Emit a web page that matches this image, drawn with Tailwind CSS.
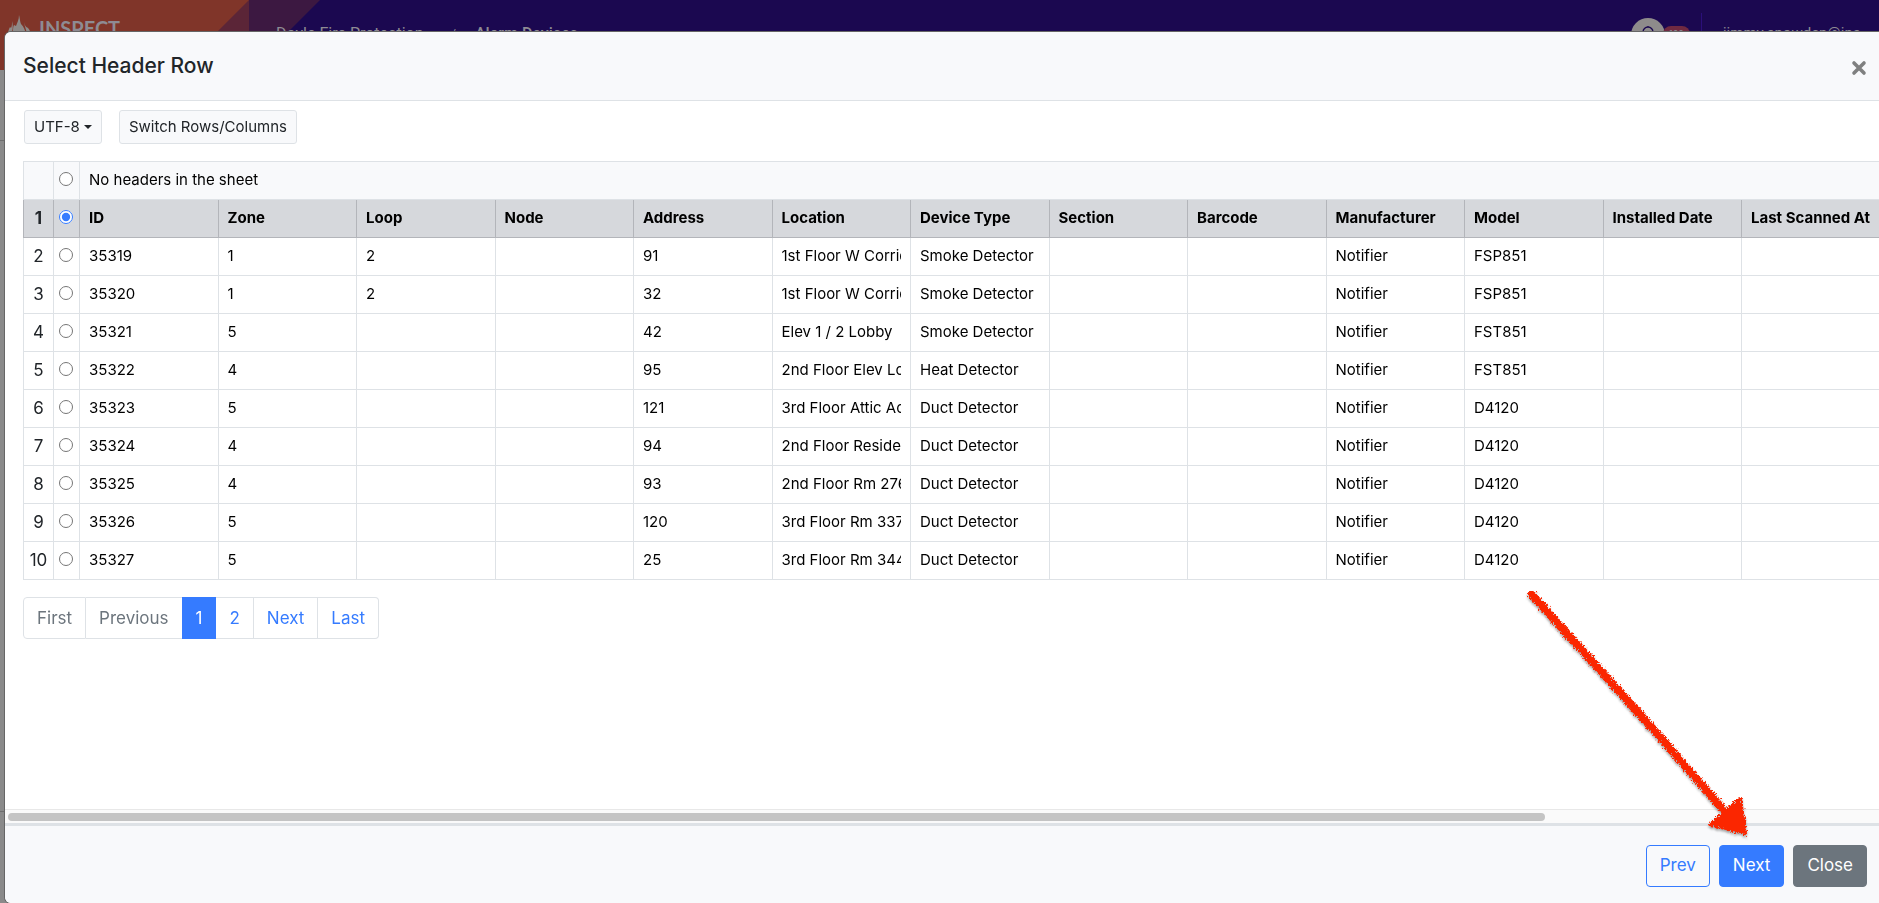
<!DOCTYPE html>
<html lang="en">
  <head>
    <meta charset="UTF-8" />
    <meta name="viewport" content="width=device-width, initial-scale=1.0" />
    <script src="https://cdn.jsdelivr.net/npm/@tailwindcss/browser@4"></script>
    <title>Alarm Devices - Import</title>
  </head>
  <body class="h-screen overflow-hidden bg-[#8a8a8a] font-['Inter','Liberation_Sans',sans-serif] text-[#212529]">
    <!-- page behind the modal -->
    <header class="relative flex h-[70px] items-start bg-[#1b0850] text-[#8e8b93]">
      <svg class="absolute top-0 left-0" width="330" height="70" viewBox="0 0 330 70">
        <path d="M0 0H320L250 70H0Z" fill="#3c1841" />
        <path d="M0 0H249V70H0Z" fill="#5b2537" />
        <path d="M0 0H249L179 70H0Z" fill="#803529" />
      </svg>
      <div class="relative flex w-[249px] gap-2 pt-[15px] pl-2">
        <svg width="23" height="28" viewBox="0 0 23 28" fill="#8e8b89">
          <path d="M11 0C12 4 12 7 13 9C16 12 17 15 18 20V28H5V17C5 14 5 12 6 10L8 11C9 8 11 5 11 0Z" />
          <path d="M4 6C5 10 5 13 4 17V28H0V19C0 16 1 14 2 12L3 13C4 11 4 9 4 6Z" />
          <path d="M16 7C17 11 18 12 20 13C22 15 23 18 23 21V28H19V18C18 15 17 12 16 7Z" />
        </svg>
        <span class="pt-px font-['Lato',sans-serif] text-[20px] leading-6 font-bold">INSPECT</span>
      </div>
      <nav class="relative flex pt-[22px] pl-[27px] font-['Roboto',sans-serif] text-[16px] leading-6">
        <a href="#" class="w-[175px]">Doyle Fire Protection</a>
        <span class="w-6 text-xs leading-6">/</span>
        <a href="#" class="font-medium">Alarm Devices</a>
      </nav>
      <div class="relative ml-auto flex items-start pr-[27px]">
        <div class="relative mt-[18px] size-[34px] rounded-full bg-[#8e8b8b]">
          <svg class="absolute top-2 left-[9px]" width="16" height="18" viewBox="0 0 16 18" fill="none" stroke="#1b0850" stroke-width="1.3">
            <path d="M8 0V1M3 13V6a5 5 0 0 1 10 0V13L15 15H1Z" />
          </svg>
          <span class="absolute top-2 left-8 rounded-full bg-[#702a41] px-[6px] text-[9px] leading-4">100</span>
        </div>
        <div class="mt-[13px] ml-[36px] h-11 w-px bg-[#2b0f7a]"></div>
        <span class="w-[150px] pt-[21px] pl-[21px] font-['Roboto',sans-serif] text-[15px] leading-6">jimmy.snowden@ins</span>
      </div>
    </header>
    <div class="h-[71px] border-b border-[#6e6e6e]"></div>
    <div class="h-[671px] border-b border-[#6e6e6e]"></div>

    <!-- modal -->
    <div role="dialog" aria-labelledby="modal-title" class="fixed top-8 right-0 bottom-0 left-[5px] flex flex-col overflow-hidden rounded-l-md bg-white shadow-[0_0_0_1px_#666]">
      <div class="flex h-[69px] shrink-0 items-center justify-between border-b border-[#dee2e6] bg-[#f8f9fb] pr-[12px] pl-[18px]">
        <h5 id="modal-title" class="text-[21px] leading-8 font-medium">Select Header Row</h5>
        <button type="button" aria-label="Close" class="mt-1 flex size-4 items-center justify-center">
          <svg width="16" height="16" viewBox="0 0 16 16" stroke="#7f8080" stroke-width="3.6" stroke-linecap="round">
            <path d="M3 3L13 13M13 3L3 13" />
          </svg>
        </button>
      </div>

      <div class="flex-1 overflow-hidden pt-[9px] pl-[18px]">
        <div class="flex gap-[17px] pl-px text-[15px]">
          <button type="button" class="flex h-[34px] items-center gap-1 rounded-[3px] border border-[#dee2e6] bg-[#f8f9fb] px-[9px]">
            UTF-8
            <svg width="8" height="4" viewBox="0 0 8 4" fill="#212529"><path d="M0 0H8L4 4Z" /></svg>
          </button>
          <button type="button" class="h-[34px] rounded-[3px] border border-[#dee2e6] bg-[#f8f9fb] px-[9px]">Switch Rows/Columns</button>
        </div>

        <table class="mt-[17px] w-[2273px] table-fixed border-collapse text-[15px] text-black">
          <colgroup>
            <col class="w-[30px]" />
            <col class="w-[26px]" />
            <col span="16" />
          </colgroup>
          <tbody id="rows">
            <tr class="h-[38px] bg-[#f8f9fb]">
              <td class="border border-[#dee2e6]"></td>
              <td class="border border-[#dee2e6] pr-px pb-[3px]">
                <input type="radio" name="header" id="no-header" class="mx-auto block size-[14px]" />
              </td>
              <td colspan="16" class="border border-[#dee2e6] px-[9px]"><label for="no-header">No headers in the sheet</label></td>
            </tr>
          </tbody>
        </table>

        <ul class="mt-[17px] flex text-[17px] leading-6 text-[#357bff]">
          <li><a class="block rounded-l border border-[#dee2e6] px-[13px] py-2 text-[#6c757d]">First</a></li>
          <li><a class="block border-y border-[#dee2e6] px-[13px] py-2 text-[#6c757d]">Previous</a></li>
          <li><a href="#" class="block border border-[#357bff] bg-[#357bff] px-[13px] py-2 text-white">1</a></li>
          <li><a href="#" class="block border-y border-r border-[#dee2e6] px-[13px] py-2">2</a></li>
          <li><a href="#" class="block border-y border-r border-[#dee2e6] px-[13px] py-2">Next</a></li>
          <li><a href="#" class="block rounded-r border-y border-r border-[#dee2e6] px-[13px] py-2">Last</a></li>
        </ul>
      </div>

      <!-- horizontal scrollbar -->
      <div class="h-[14px] shrink-0 border-t border-[#e8e8e8] bg-[#fafafa] px-[3px] pt-[3px]">
        <div class="h-2 w-[82.3%] rounded-full bg-[#c4c4c4]"></div>
      </div>

      <div class="flex h-20 shrink-0 items-center justify-end gap-[9px] border-t-3 border-[#dee2e6] bg-[#f8f9fb] pt-[2px] pr-[12px] text-[17px]">
        <button type="button" class="h-[42px] rounded border border-[#357bff] px-[13px] text-[#357bff]">Prev</button>
        <button type="button" class="h-[42px] rounded border border-[#357bff] bg-[#357bff] px-[13px] text-white">Next</button>
        <button type="button" class="h-[42px] rounded border border-[#6c757d] bg-[#6c757d] px-[13px] text-white">Close</button>
      </div>
    </div>

    <!-- arrow pointing at the Next button -->
    <svg class="pointer-events-none fixed right-[119px] bottom-[53px] drop-shadow-[0_2px_1px_rgba(0,0,0,0.35)]" width="240" height="270" viewBox="0 0 240 270">
      <filter id="crayon" x="-10%" y="-10%" width="120%" height="120%">
        <feTurbulence type="fractalNoise" baseFrequency="0.6" numOctaves="2" seed="4" />
        <feDisplacementMap in="SourceGraphic" scale="7" xChannelSelector="R" yChannelSelector="G" />
      </filter>
      <g filter="url(#crayon)" fill="#fb2605" stroke="#fb2605" stroke-linejoin="round" stroke-linecap="round">
        <path d="M12 15L71 80L141 158L207 234" stroke-width="8" fill="none" />
        <path d="M220 219L225 253L191 244Z" stroke-width="4" />
      </g>
    </svg>

    <script>
      const rows = [
        ["ID", "Zone", "Loop", "Node", "Address", "Location", "Device Type", "Section", "Barcode", "Manufacturer", "Model", "Installed Date", "Last Scanned At"],
        ["35319", "1", "2", "", "91", "1st Floor W Corridor", "Smoke Detector", "", "", "Notifier", "FSP851"],
        ["35320", "1", "2", "", "32", "1st Floor W Corridor", "Smoke Detector", "", "", "Notifier", "FSP851"],
        ["35321", "5", "", "", "42", "Elev 1 / 2 Lobby", "Smoke Detector", "", "", "Notifier", "FST851"],
        ["35322", "4", "", "", "95", "2nd Floor Elev Lobby", "Heat Detector", "", "", "Notifier", "FST851"],
        ["35323", "5", "", "", "121", "3rd Floor Attic Access", "Duct Detector", "", "", "Notifier", "D4120"],
        ["35324", "4", "", "", "94", "2nd Floor Residence", "Duct Detector", "", "", "Notifier", "D4120"],
        ["35325", "4", "", "", "93", "2nd Floor Rm 276", "Duct Detector", "", "", "Notifier", "D4120"],
        ["35326", "5", "", "", "120", "3rd Floor Rm 337", "Duct Detector", "", "", "Notifier", "D4120"],
        ["35327", "5", "", "", "25", "3rd Floor Rm 344", "Duct Detector", "", "", "Notifier", "D4120"],
      ];

      const body = document.getElementById("rows");
      rows.forEach((row, i) => {
        const border = i === 0 ? "border border-[#b3b5ba]" : "border border-[#dee2e6]";
        const tag = i === 0 ? "th" : "td";
        let cells = "";
        for (let c = 0; c < 16; c++) {
          cells += `<${tag} class="${border} px-[9px] text-left"><div class="overflow-hidden whitespace-nowrap">${row[c] || ""}</div></${tag}>`;
        }
        body.insertAdjacentHTML(
          "beforeend",
          `<tr class="h-[38px] ${i === 0 ? "bg-[#d6d8dc] font-bold" : ""}">
            <td class="${border} text-center text-[17px] text-[#212529]">${i + 1}</td>
            <td class="${border} pr-px pb-[3px]"><input type="radio" name="header" aria-label="Row ${i + 1}" class="mx-auto block size-[14px] accent-[#357bff]" ${i === 0 ? "checked" : ""} /></td>
            ${cells}
          </tr>`
        );
      });
    </script>
  </body>
</html>
